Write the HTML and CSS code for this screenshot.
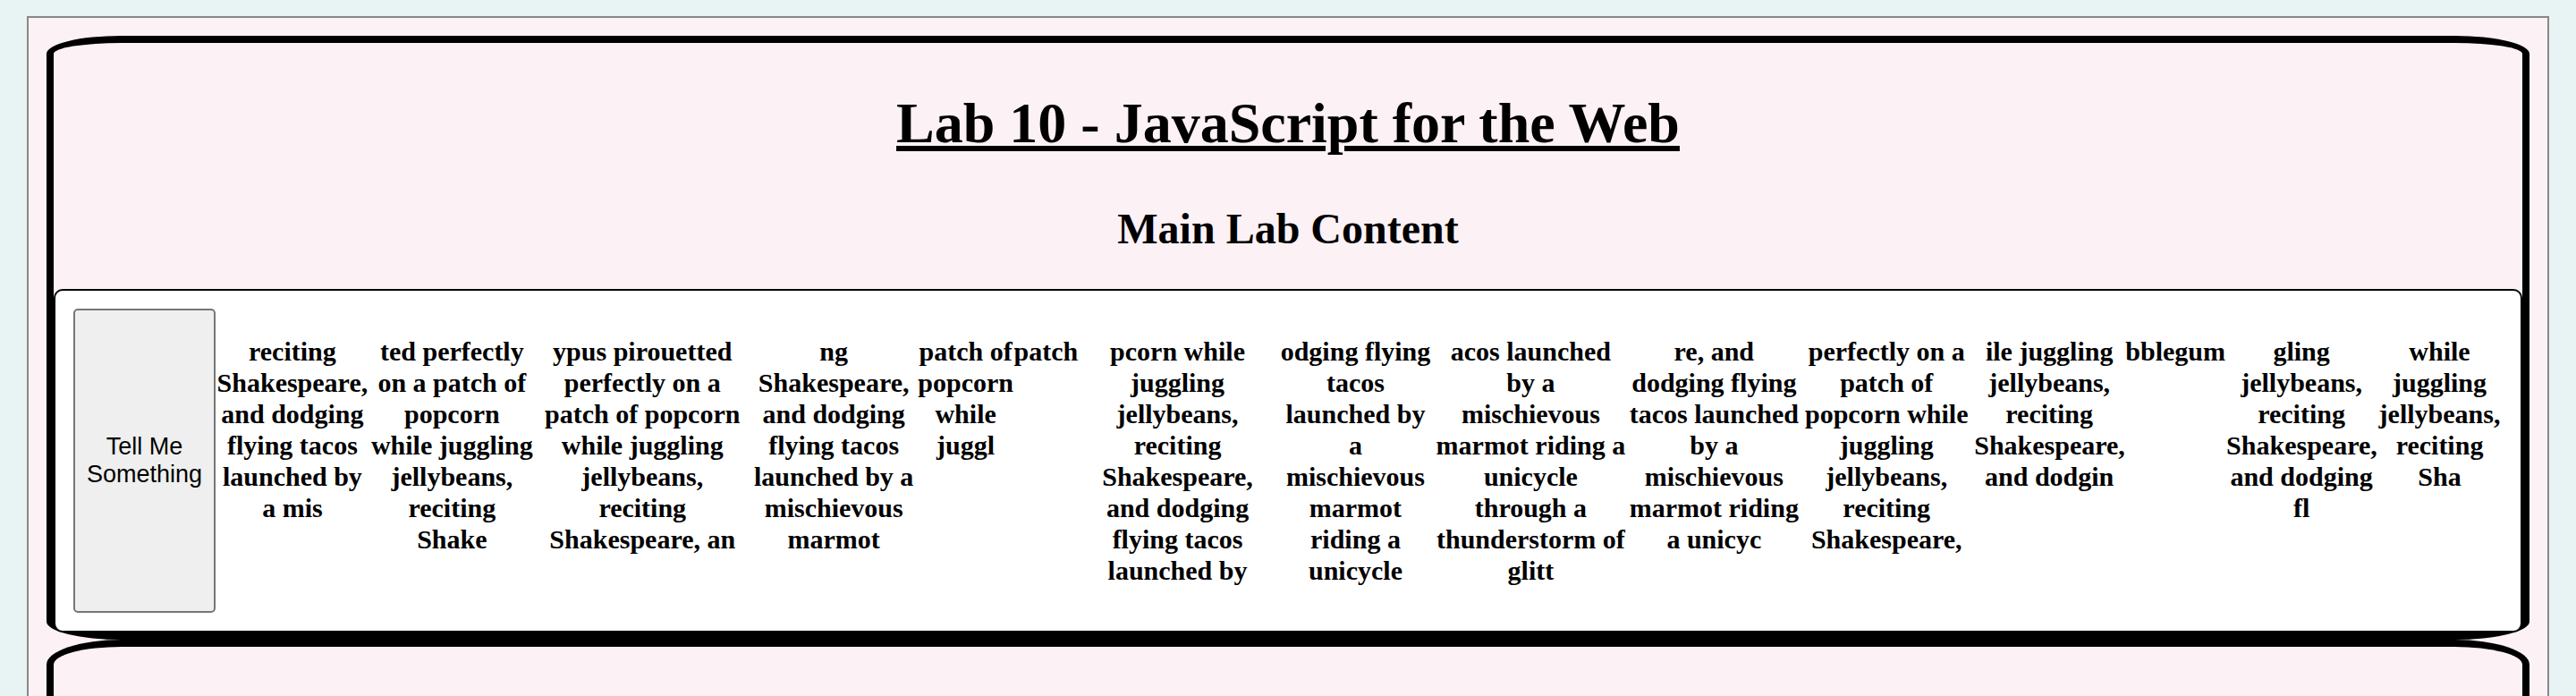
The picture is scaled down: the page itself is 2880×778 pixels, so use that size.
FILE: index.html
```html
<!DOCTYPE html>
<html lang="en">
<head>
<meta charset="utf-8">
<title>Lab 10 - JavaScript for the Web</title>
<link rel="stylesheet" href="styles.css">
</head>
<body>
<div class="page">
  <main class="panel">
    <h1 class="title">Lab 10 - JavaScript for the Web</h1>
    <h2 class="subtitle">Main Lab Content</h2>
    <div class="card">
      <button class="tell" type="button">Tell Me Something</button>
      <p class="story">reciting<br>Shakespeare,<br>and dodging<br>flying tacos<br>launched by<br>a mis</p>
      <p class="story">ted perfectly<br>on a patch of<br>popcorn<br>while juggling<br>jellybeans,<br>reciting<br>Shake</p>
      <p class="story">ypus pirouetted<br>perfectly on a<br>patch of popcorn<br>while juggling<br>jellybeans,<br>reciting<br>Shakespeare, an</p>
      <p class="story">ng<br>Shakespeare,<br>and dodging<br>flying tacos<br>launched by a<br>mischievous<br>marmot</p>
      <p class="story">patch of<br>popcorn<br>while<br>juggl</p>
      <p class="story">patch</p>
      <p class="story">pcorn while<br>juggling<br>jellybeans,<br>reciting<br>Shakespeare,<br>and dodging<br>flying tacos<br>launched by</p>
      <p class="story">odging flying<br>tacos<br>launched by<br>a<br>mischievous<br>marmot<br>riding a<br>unicycle</p>
      <p class="story">acos launched<br>by a<br>mischievous<br>marmot riding a<br>unicycle<br>through a<br>thunderstorm of<br>glitt</p>
      <p class="story">re, and<br>dodging flying<br>tacos launched<br>by a<br>mischievous<br>marmot riding<br>a unicyc</p>
      <p class="story">perfectly on a<br>patch of<br>popcorn while<br>juggling<br>jellybeans,<br>reciting<br>Shakespeare,</p>
      <p class="story">ile juggling<br>jellybeans,<br>reciting<br>Shakespeare,<br>and dodgin</p>
      <p class="story">bblegum</p>
      <p class="story">gling<br>jellybeans,<br>reciting<br>Shakespeare,<br>and dodging<br>fl</p>
      <p class="story">while<br>juggling<br>jellybeans,<br>reciting<br>Sha</p>
    </div>
  </main>
  <section class="panel panel-next"></section>
</div>
</body>
</html>
```
FILE: styles.css
```css
* {
  box-sizing: border-box;
}

body {
  display: flex;
  flex-direction: column;
  min-height: 100vh;
  margin: 0;
  padding: 18px 30px 0;
  background: #e8f4f4;
  color: #000;
  font-family: "Liberation Serif", "Times New Roman", serif;
}

.page {
  display: flex;
  flex: 1;
  flex-direction: column;
  padding: 20px 20px 0;
  border: 2px solid #888;
  border-bottom: 0;
  background: #fcf1f5;
}

.panel {
  border: 8px solid #000;
  border-radius: 3%;
  text-align: center;
}

.panel-next {
  flex: 1;
  border-bottom: 0;
  border-radius: 84px 84px 0 0 / 28px 28px 0 0;
}

.title {
  margin: 53px 0;
  font-size: 64px;
  line-height: 74px;
  text-decoration: underline;
  text-decoration-thickness: 6px;
  text-underline-offset: 4px;
}

.subtitle {
  margin: 0 0 40px;
  font-size: 48px;
  line-height: 55px;
}

.card {
  display: grid;
  grid-template-columns:
    minmax(0, 159fr) minmax(0, 172fr) minmax(0, 185fr) minmax(0, 241fr)
    minmax(0, 187fr) minmax(0, 108fr) minmax(0, 70fr) minmax(0, 226fr)
    minmax(0, 172fr) minmax(0, 220fr) minmax(0, 190fr) minmax(0, 196fr)
    minmax(0, 168fr) minmax(0, 114fr) minmax(0, 168fr) minmax(0, 141fr);
  padding: 20px;
  border: 2px solid #000;
  border-radius: 10px;
  background: #fff;
}

.tell {
  padding: 2px 12px;
  border: 2px solid #767676;
  border-radius: 5px;
  background: #efefef;
  color: #000;
  font-family: "Liberation Sans", Arial, sans-serif;
  font-size: 27px;
  line-height: 31px;
}

.story {
  margin: 30px 0;
  font-size: 30px;
  font-weight: bold;
  line-height: 35px;
  white-space: nowrap;
}
```
